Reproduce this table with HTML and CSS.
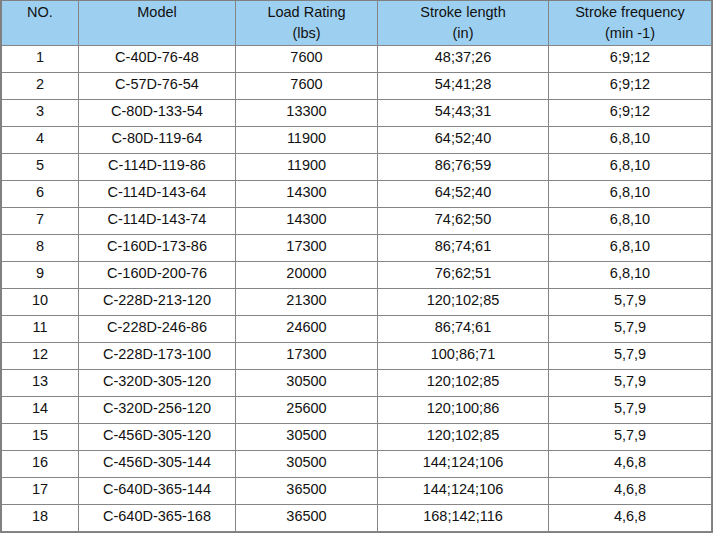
FILE: index.html
```html
<!DOCTYPE html>
<html>
<head>
<meta charset="utf-8">
<link rel="stylesheet" href="styles.css">
</head>
<body>
<table class="spec">
<colgroup>
<col class="c-no"><col class="c-model"><col class="c-load"><col class="c-len"><col class="c-freq">
</colgroup>
<thead>
<tr><th>NO.</th><th>Model</th><th>Load Rating<br>(lbs)</th><th>Stroke length<br>(in)</th><th>Stroke frequency<br>(min -1)</th></tr>
</thead>
<tbody>
<tr><td>1</td><td>C-40D-76-48</td><td>7600</td><td>48;37;26</td><td>6;9;12</td></tr>
<tr><td>2</td><td>C-57D-76-54</td><td>7600</td><td>54;41;28</td><td>6;9;12</td></tr>
<tr><td>3</td><td>C-80D-133-54</td><td>13300</td><td>54;43;31</td><td>6;9;12</td></tr>
<tr><td>4</td><td>C-80D-119-64</td><td>11900</td><td>64;52;40</td><td>6,8,10</td></tr>
<tr><td>5</td><td>C-114D-119-86</td><td>11900</td><td>86;76;59</td><td>6,8,10</td></tr>
<tr><td>6</td><td>C-114D-143-64</td><td>14300</td><td>64;52;40</td><td>6,8,10</td></tr>
<tr><td>7</td><td>C-114D-143-74</td><td>14300</td><td>74;62;50</td><td>6,8,10</td></tr>
<tr><td>8</td><td>C-160D-173-86</td><td>17300</td><td>86;74;61</td><td>6,8,10</td></tr>
<tr><td>9</td><td>C-160D-200-76</td><td>20000</td><td>76;62;51</td><td>6,8,10</td></tr>
<tr><td>10</td><td>C-228D-213-120</td><td>21300</td><td>120;102;85</td><td>5,7,9</td></tr>
<tr><td>11</td><td>C-228D-246-86</td><td>24600</td><td>86;74;61</td><td>5,7,9</td></tr>
<tr><td>12</td><td>C-228D-173-100</td><td>17300</td><td>100;86;71</td><td>5,7,9</td></tr>
<tr><td>13</td><td>C-320D-305-120</td><td>30500</td><td>120;102;85</td><td>5,7,9</td></tr>
<tr><td>14</td><td>C-320D-256-120</td><td>25600</td><td>120;100;86</td><td>5,7,9</td></tr>
<tr><td>15</td><td>C-456D-305-120</td><td>30500</td><td>120;102;85</td><td>5,7,9</td></tr>
<tr><td>16</td><td>C-456D-305-144</td><td>30500</td><td>144;124;106</td><td>4,6,8</td></tr>
<tr><td>17</td><td>C-640D-365-144</td><td>36500</td><td>144;124;106</td><td>4,6,8</td></tr>
<tr><td>18</td><td>C-640D-365-168</td><td>36500</td><td>168;142;116</td><td>4,6,8</td></tr>
</tbody>
</table>
</body>
</html>
```
FILE: styles.css
```css
html, body {
  margin: 0;
  padding: 0;
  background: #ffffff;
}
.spec {
  border-collapse: separate;
  border-spacing: 0;
  table-layout: fixed;
  width: 713px;
  font-family: "Liberation Sans", Arial, sans-serif;
  font-size: 14.5px;
  color: #111;
  border-top: 1px solid #808080;
  border-left: 2px solid #808080;
  border-right: 1px solid #808080;
  border-bottom: 1px solid #808080;
}
.c-no { width: 77px; }
.c-model { width: 157px; }
.c-load { width: 142px; }
.c-len { width: 171px; }
.c-freq { width: 163px; }
.spec th, .spec td {
  border: 0;
  border-right: 1px solid #858585;
  border-bottom: 1px solid #858585;
  text-align: center;
  padding: 0;
  box-sizing: border-box;
}
.spec th {
  background: #9dd0f0;
  font-weight: normal;
  vertical-align: top;
  height: 45px;
  line-height: 21px;
  padding-top: 1px;
}
.spec td {
  height: 27px;
  line-height: 16px;
  padding-bottom: 4px;
  vertical-align: middle;
}
```
